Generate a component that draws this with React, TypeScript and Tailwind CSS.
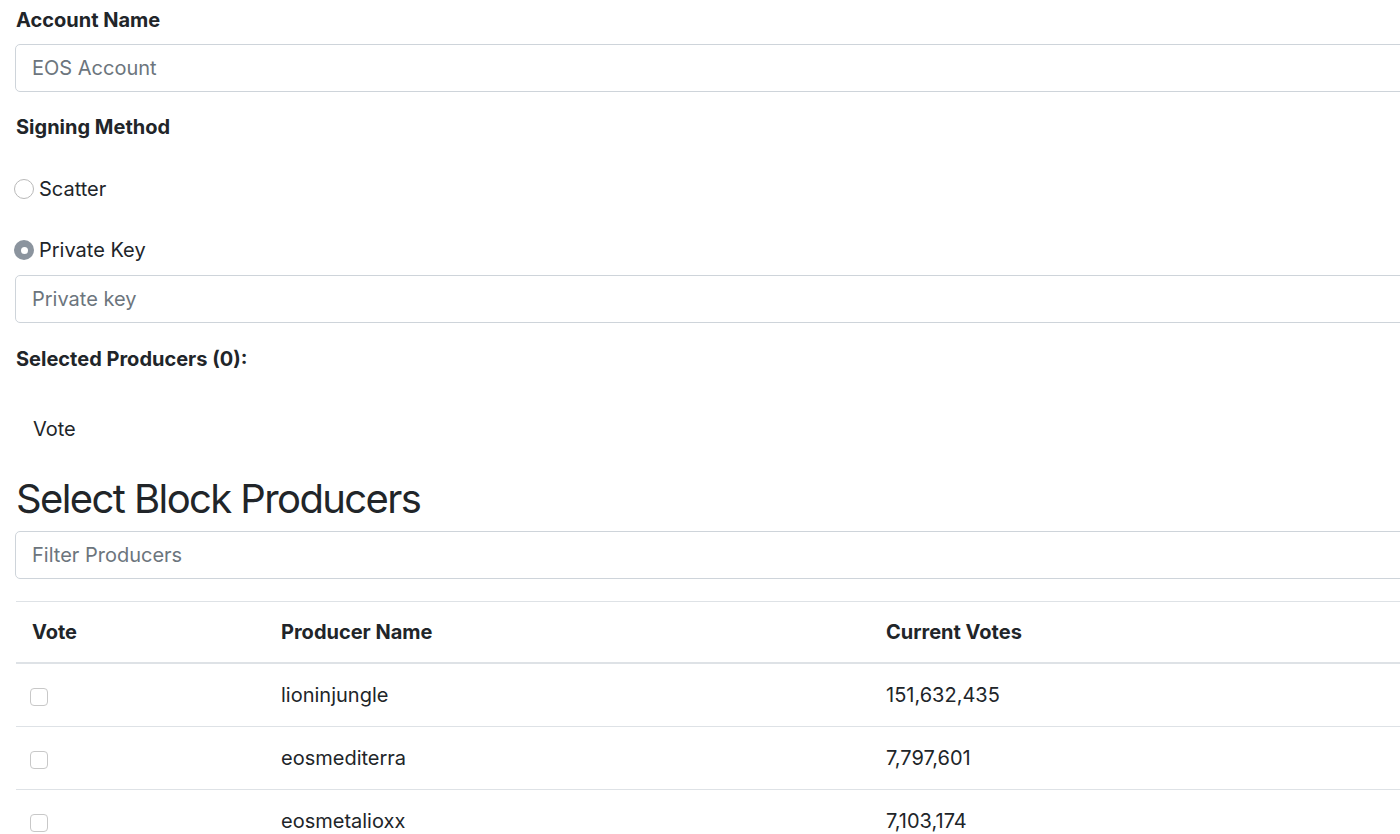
import React from 'react';

const producers = [
  { name: 'lioninjungle', votes: '151,632,435' },
  { name: 'eosmediterra', votes: '7,797,601' },
  { name: 'eosmetalioxx', votes: '7,103,174' },
];

const Input: React.FC<{ placeholder: string }> = ({ placeholder }) => (
  <input
    type="text"
    placeholder={placeholder}
    className="block w-full h-[48px] -ml-px rounded-[5px] border border-[#ced4da] bg-white px-[16px] text-[20px] text-[#495057] placeholder:text-[#6c757d] outline-none"
  />
);

const Radio: React.FC<{ label: string; checked?: boolean }> = ({ label, checked }) => (
  <label className="flex items-center h-[30px] -ml-[2px]">
    {checked ? (
      <span className="flex items-center justify-center w-[20px] h-[20px] rounded-full bg-[#8b949e]">
        <span className="w-[7px] h-[7px] rounded-full bg-white" />
      </span>
    ) : (
      <span className="w-[20px] h-[20px] rounded-full border border-[#b9b9b9] bg-white" />
    )}
    <span className="ml-[5px]">{label}</span>
  </label>
);

export default function App() {
  return (
    <div
      className="h-[834px] w-[1400px] overflow-hidden bg-white text-[20px] leading-[30px] text-[#212529]"
      style={{ fontFamily: 'Inter, "Liberation Sans", sans-serif' }}
    >
      <div className="w-[1600px] pl-[16px] pt-[5px]">
        {/* Account */}
        <div className="mb-[20px]">
          <label className="block font-bold mb-[9px]">Account Name</label>
          <Input placeholder="EOS Account" />
        </div>

        {/* Signing method */}
        <div className="mb-[21px]">
          <label className="block font-bold mb-[32px]">Signing Method</label>
          <Radio label="Scatter" />
          <div className="mt-[31px]">
            <Radio label="Private Key" checked />
          </div>
          <div className="mt-[10px]">
            <Input placeholder="Private key" />
          </div>
        </div>

        {/* Selected */}
        <div className="font-bold">Selected Producers (0):</div>
        <button className="mt-[32px] px-[16px] py-[7px] border border-transparent bg-transparent text-[20px] leading-[30px] text-[#212529]">
          Vote
        </button>

        <h2 className="mt-[23px] mb-[8px] text-[40px] leading-[48px] font-normal tracking-[-0.04em]">
          Select Block Producers
        </h2>
        <Input placeholder="Filter Producers" />

        <table className="mt-[22px] w-full border-collapse text-left">
          <thead>
            <tr className="border-t border-[#dee2e6] border-b-[2px]">
              <th className="w-[250px] p-[15px] pl-[16px] font-bold align-bottom">Vote</th>
              <th className="w-[605px] p-[15px] font-bold align-bottom">Producer Name</th>
              <th className="p-[15px] font-bold align-bottom">Current Votes</th>
            </tr>
          </thead>
          <tbody>
            {producers.map((p) => (
              <tr key={p.name} className="border-t border-[#dee2e6]">
                <td className="px-[14px] py-[16px]">
                  <span className="block w-[18px] h-[18px] rounded-[4px] border border-[#c8c8c8] bg-white mt-[3px]" />
                </td>
                <td className="px-[15px] py-[16px]">{p.name}</td>
                <td className="px-[15px] py-[16px]">{p.votes}</td>
              </tr>
            ))}
          </tbody>
        </table>
      </div>
    </div>
  );
}
